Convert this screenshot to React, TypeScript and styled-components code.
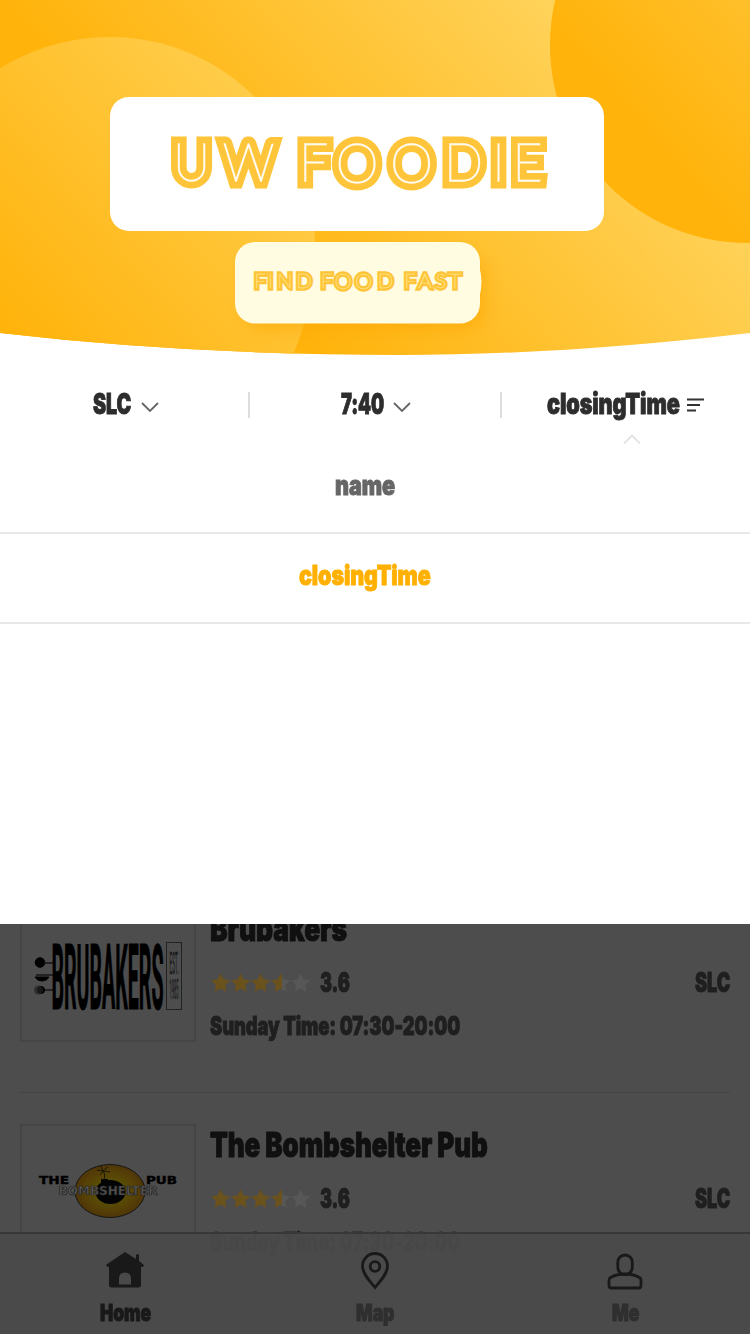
import React, { useLayoutEffect, useRef } from "react";
import styled, { createGlobalStyle } from "styled-components";

const GlobalStyle = createGlobalStyle`
  * { box-sizing: border-box; }
  body { margin: 0; background: #fff; font-family: Inter, "Liberation Sans", sans-serif; }
`;

/* Heavy condensed lettering: the line is squeezed to the given width. */
const LabelBox = styled.span<{ $w: number; $size: number; $color: string; $lh?: number }>`
  display: block;
  flex: none;
  width: ${(p) => p.$w}px;
  height: ${(p) => p.$lh ?? Math.round(p.$size * 1.2)}px;
  line-height: ${(p) => p.$lh ?? Math.round(p.$size * 1.2)}px;
  font-size: ${(p) => p.$size}px;
  font-weight: 900;
  letter-spacing: -0.005em;
  color: ${(p) => p.$color};
  white-space: nowrap;
`;
const LabelText = styled.span`
  display: inline-block;
  transform-origin: 0 50%;
  -webkit-text-stroke: 0.9px currentColor;
`;
type LabelProps = { text: string; w: number; size: number; color: string; lh?: number };
const Label = ({ text, w, size, color, lh }: LabelProps) => {
  const ref = useRef<HTMLSpanElement>(null);
  useLayoutEffect(() => {
    const el = ref.current;
    if (el) el.style.transform = `scaleX(${w / el.offsetWidth})`;
  }, [text, w, size]);
  return (
    <LabelBox $w={w} $size={size} $color={color} $lh={lh}>
      <LabelText ref={ref}>{text}</LabelText>
    </LabelBox>
  );
};

const Screen = styled.div`
  position: relative;
  width: 750px;
  height: 1334px;
  overflow: hidden;
  display: flex;
  flex-direction: column;
`;
const Banner = styled.svg`
  display: block;
  flex: none;
`;
const Filters = styled.div`
  display: flex;
  height: 84px;
  padding-top: 34px;
  flex: none;
`;
const Filter = styled.div<{ $left: number; $gap: number; $width: number }>`
  display: flex;
  width: ${(p) => p.$width}px;
  height: 32px;
  padding-left: ${(p) => p.$left}px;
  gap: ${(p) => p.$gap}px;
`;
const Divider = styled.div`
  width: 2px;
  height: 26px;
  margin-top: 2px;
  background: #ddd;
`;
const FilterIcon = styled.svg`
  flex: none;
  margin-top: 7px;
`;
const Pointer = styled.svg`
  position: absolute;
  left: 622px;
  top: 434px;
`;
const Options = styled.div`
  height: 484px;
  flex: none;
`;
const Option = styled.div<{ $first?: boolean }>`
  display: flex;
  justify-content: center;
  align-items: center;
  height: ${(p) => (p.$first ? 94 : 90)}px;
  padding: ${(p) => (p.$first ? "0 20px 0 0" : "0 20px 4px 0")};
  border-bottom: 2px solid #e8e8e8;
`;
const List = styled.div`
  height: 410px;
  flex: none;
  overflow: hidden;
  background: #4d4d4d;
  padding: 0 20px;
`;
const Row = styled.div<{ $first?: boolean }>`
  display: flex;
  gap: 14px;
  margin-top: ${(p) => (p.$first ? -16 : 0)}px;
  height: ${(p) => (p.$first ? 185 : 216)}px;
  padding-top: ${(p) => (p.$first ? 0 : 31)}px;
  border-bottom: 1px solid #444;
`;
const Thumb = styled.div`
  flex: none;
  width: 176px;
  height: 134px;
  border: 2px solid #454545;
`;
const Info = styled.div`
  flex: 1;
`;
const Title = styled.div`
  height: 57px;
`;
const Rating = styled.div`
  display: flex;
  align-items: center;
  height: 34px;
  padding-top: 1px;
  margin-bottom: 11px;
`;
const Stars = styled.svg`
  margin-right: 9px;
  flex: none;
`;
const Spacer = styled.div`
  flex: 1;
`;
const TabBar = styled.div`
  position: absolute;
  left: 0;
  bottom: 0;
  width: 750px;
  height: 102px;
  display: flex;
  background: rgba(74, 74, 74, 0.94);
  border-top: 2px solid #383838;
`;
const Tab = styled.div`
  flex: 1;
  display: flex;
  flex-direction: column;
  align-items: center;
  padding-top: 16px;
  gap: 6px;
`;

const STAR = "M10 0.8l2.9 6.1 6.7.9-4.9 4.7 1.2 6.7L10 16l-5.9 3.2 1.2-6.7L.4 7.8l6.7-.9z";

const StarRow = () => (
  <Stars width="101" height="22" viewBox="0 0 101 22">
    <defs>
      <linearGradient id="half">
        <stop offset=".56" stopColor="#6b511b" />
        <stop offset=".56" stopColor="#575757" />
      </linearGradient>
    </defs>
    {[0, 1, 2, 3, 4].map((i) => (
      <path key={i} d={STAR} transform={`translate(${i * 20 + 0.6} 0.5)`} fill={i < 3 ? "#6b511b" : i === 3 ? "url(#half)" : "#575757"} />
    ))}
  </Stars>
);

const BrubakersLogo = () => (
  <svg width="172" height="130" viewBox="22 910 172 130">
    <g fill="#000" stroke="#000">
      <circle cx="40" cy="962.5" r="4.800" />
      <path d="M44 963h9M36 975h17M44 990h9" strokeWidth="1.500" stroke="#161616" />
      <path d="M35 977h14q-2 4-7 4t-7-4z" />
      <circle cx="41" cy="990" r="3.600" />
      <circle cx="38.500" cy="990" r="4.500" stroke="none" fill="#222" opacity=".7" />
    </g>
    <text x="51.500" y="1008.500" textLength="112" lengthAdjust="spacingAndGlyphs" fontFamily="Roboto, sans-serif" fontWeight="700" fontSize="91" fill="#000" stroke="#000" strokeWidth="1">
      BRUBAKERS
    </text>
    <rect x="166.500" y="942.500" width="15" height="67" fill="none" stroke="#222" />
    <text x="169.500" y="974" textLength="9" lengthAdjust="spacingAndGlyphs" fontFamily="Roboto, sans-serif" fontSize="32" fill="#1c1c1c" stroke="#1c1c1c" strokeWidth=".6">EST.</text>
    <text x="169.500" y="999" textLength="9" lengthAdjust="spacingAndGlyphs" fontFamily="Roboto, sans-serif" fontSize="28" fill="#1c1c1c" stroke="#1c1c1c" strokeWidth=".6">1985</text>
  </svg>
);

const BombLogo = () => (
  <svg width="172" height="130" viewBox="22 1126 172 130">
    <defs>
      <radialGradient id="sun">
        <stop offset=".3" stopColor="#5a5205" />
        <stop offset=".75" stopColor="#564006" />
        <stop offset="1" stopColor="#4f3508" />
      </radialGradient>
    </defs>
    <ellipse cx="110" cy="1191" rx="35" ry="26.500" fill="url(#sun)" stroke="#161616" />
    <ellipse cx="110.500" cy="1192" rx="15" ry="12" fill="#040404" />
    <path d="M101 1179h7v6h-7z" fill="#040404" />
    <path d="M104 1180q2-5-1-10M103 1171l-6-1M103 1171l5-4M103 1171l7 1M103 1171l-3 4M103 1171l-2-5" fill="none" stroke="#1c1604" strokeWidth="1" />
    <g fontFamily="DejaVu Sans, sans-serif" fontWeight="700">
      <text x="39" y="1184" fontSize="10" textLength="30" lengthAdjust="spacingAndGlyphs" fill="#000" stroke="#000" strokeWidth=".4">THE</text>
      <text x="146" y="1184" fontSize="10" textLength="31" lengthAdjust="spacingAndGlyphs" fill="#000" stroke="#000" strokeWidth=".4">PUB</text>
      <text x="58.500" y="1195" fontSize="11.500" textLength="99" lengthAdjust="spacingAndGlyphs" fill="#585858" stroke="#222" strokeWidth=".7">BOMBSHELTER</text>
    </g>
  </svg>
);

type WordmarkProps = { text: string; xs: number[]; y: number; size: number; stroke: number; inner: number; paper: string };
const Wordmark = ({ text, xs, y, size, stroke, inner, paper }: WordmarkProps) => {
  const letters = text.split("").map((c, i) => (
    <tspan key={i} x={xs[i]} y={c === "O" ? y + size * 0.03 : y} fontSize={c === "O" ? size * 1.07 : size}>
      {c}
    </tspan>
  ));
  return (
    <g fontFamily="Lato, sans-serif" fontWeight="100" textAnchor="middle" strokeLinejoin="miter">
      <text fill="#ffc53a" stroke="#ffc53a" strokeWidth={stroke} strokeMiterlimit={2}>{letters}</text>
      <text fill={paper} stroke={paper} strokeWidth={inner} aria-hidden="true">{letters}</text>
    </g>
  );
};

const Header = () => (
  <Banner width="750" height="356" viewBox="0 0 750 356">
    <defs>
      <linearGradient id="base" gradientUnits="userSpaceOnUse" x1="0" y1="0" x2="307" y2="-270">
        <stop offset="0" stopColor="#ffb30b" />
        <stop offset="1" stopColor="#ffd259" />
      </linearGradient>
      <linearGradient id="leftDisc" gradientUnits="userSpaceOnUse" x1="-160" y1="141" x2="100" y2="-88">
        <stop offset="0" stopColor="#ffb30b" />
        <stop offset="1" stopColor="#ffcd4b" />
      </linearGradient>
      <linearGradient id="rightDisc" gradientUnits="userSpaceOnUse" x1="300" y1="-264" x2="570" y2="-500">
        <stop offset="0" stopColor="#ffb30b" />
        <stop offset="1" stopColor="#ffcf50" />
      </linearGradient>
      <clipPath id="arc"><path d="M0 0H750V333Q562 355 400 355Q190 355 0 333z" /></clipPath>
      <filter id="soft" x="-20%" y="-20%" width="140%" height="150%"><feGaussianBlur stdDeviation="8" /></filter>
    </defs>
    <g clipPath="url(#arc)">
      <rect width="750" height="356" fill="url(#base)" />
      <path d="M-100 242C-100 129 -3 37 110 37S315 129 315 242Q315 305 291 360H-100z" fill="url(#leftDisc)" />
      <circle cx="748" cy="45" r="198" fill="url(#rightDisc)" />
      <rect x="245" y="256" width="240" height="74" rx="20" fill="#ffa600" opacity=".55" filter="url(#soft)" />
    </g>
    <rect x="110" y="97" width="494" height="134" rx="19" fill="#fff" />
    <rect x="235" y="242" width="245" height="81.500" rx="20" fill="#fffce2" />
    <path d="M479 266q5 16 0 32z" fill="#fffce2" />
    <Wordmark text="UWFOODIE" xs={[191.5, 248.5, 313.5, 357, 411.5, 463.5, 498.5, 527.5]} y={181} size={51.5} stroke={15} inner={1.3} paper="#fffaf0" />
    <Wordmark text="FINDFOODFAST" xs={[260, 270.5, 285, 304, 326.5, 343, 363.5, 385.5, 410, 425, 441, 455]} y={288} size={20.5} stroke={5.4} inner={0.3} paper="#ffe795" />
  </Banner>
);

type RestaurantProps = { name: string; nameWidth: number; logo: React.ReactNode; first?: boolean };
const Restaurant = ({ name, nameWidth, logo, first }: RestaurantProps) => (
  <Row $first={first}>
    <Thumb>{logo}</Thumb>
    <Info>
      <Title><Label text={name} w={nameWidth} size={34} lh={42} color="#101010" /></Title>
      <Rating>
        <StarRow />
        <Label text="3.6" w={30} size={27} lh={34} color="#1f1f1f" />
        <Spacer />
        <Label text="SLC" w={35} size={27} lh={34} color="#1f1f1f" />
      </Rating>
      <Label text="Sunday Time: 07:30-20:00" w={250} size={26} lh={32} color="#1f1f1f" />
    </Info>
  </Row>
);

const Chevron = () => (
  <FilterIcon width="18" height="20" viewBox="0 0 18 20" fill="none" stroke="#666" strokeWidth="1.800">
    <path d="M1 6l8 8 8-8" />
  </FilterIcon>
);

export default function App() {
  return (
    <>
      <GlobalStyle />
      <Screen>
        <Header />
        <Filters>
          <Filter $left={93} $gap={10} $width={248}>
            <Label text="SLC" w={38} size={28} color="#2d2d2d" lh={28} />
            <Chevron />
          </Filter>
          <Divider />
          <Filter $left={91} $gap={9} $width={250}>
            <Label text="7:40" w={43} size={28} color="#2d2d2d" lh={28} />
            <Chevron />
          </Filter>
          <Divider />
          <Filter $left={45} $gap={7} $width={248}>
            <Label text="closingTime" w={133} size={28} color="#2d2d2d" lh={28} />
            <FilterIcon width="18" height="18" viewBox="0 0 18 18" stroke="#333" strokeWidth="1.800">
              <path d="M0 2.500h17M0 8h13M0 13.500h9" />
            </FilterIcon>
          </Filter>
        </Filters>
        <Pointer width="20" height="10" viewBox="0 0 20 10" fill="none" stroke="#e4e4e4" strokeWidth="2">
          <path d="M2 9.500l8-8 8 8" />
        </Pointer>
        <Options>
          <Option $first><Label text="name" w={60} size={27} color="#666" /></Option>
          <Option><Label text="closingTime" w={132} size={27} color="#ffb000" /></Option>
        </Options>
        <List>
          <Restaurant first name="Brubakers" nameWidth={137} logo={<BrubakersLogo />} />
          <Restaurant name="The Bombshelter Pub" nameWidth={278} logo={<BombLogo />} />
        </List>
        <TabBar>
          <Tab>
            <svg width="40" height="42" viewBox="0 0 40 42" fill="#191919">
              <path d="M20 2l11 7V5q2-2 3 0v6l4.500 3.500q1 3-2.500 2.500v18q0 2.500-2.500 2.500h-27Q4 37.500 4 35V17q-3 .500-2.500-2.500z" />
              <path d="M14 34.500v-6q0-6 6-6t6 6v6z" fill="#4a4a4a" />
            </svg>
            <Label text="Home" w={51} size={23.5} lh={29} color="#191919" />
          </Tab>
          <Tab>
            <svg width="40" height="42" viewBox="0 0 40 42" fill="none" stroke="#191919" strokeWidth="2.800">
              <path d="M20 37.500C15 31 7.500 24 7.500 16a12.500 12.500 0 0 1 25 0C32.500 24 25 31 20 37.500z" />
              <circle cx="20" cy="16.500" r="4.800" />
            </svg>
            <Label text="Map" w={38} size={23.5} lh={29} color="#2f2f2f" />
          </Tab>
          <Tab>
            <svg width="40" height="42" viewBox="0 0 40 42" fill="none" stroke="#191919" strokeWidth="2.800">
              <rect x="12.800" y="5" width="14.500" height="19.500" rx="7.200" />
              <path d="M14 24.500q-4 .500-8.500 3-1.500 1-1.500 3v5q0 2.500 2.500 2.500h27q2.500 0 2.500-2.500v-5q0-2-1.500-3-4.500-2.500-8.500-3-6-1-12 0z" />
            </svg>
            <Label text="Me" w={27} size={23.5} lh={29} color="#2f2f2f" />
          </Tab>
        </TabBar>
      </Screen>
    </>
  );
}
